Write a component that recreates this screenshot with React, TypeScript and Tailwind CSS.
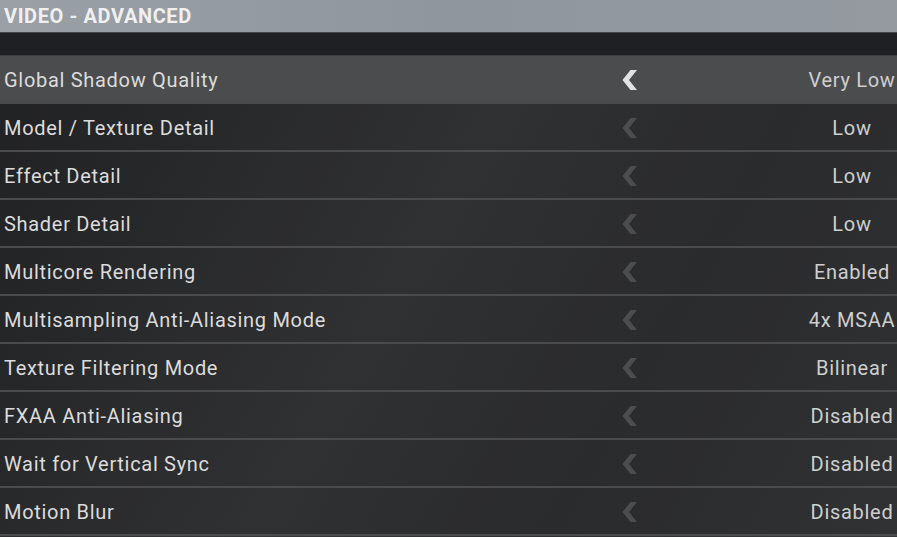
const settings = [
  { label: 'Global Shadow Quality', value: 'Very Low' },
  { label: 'Model / Texture Detail', value: 'Low' },
  { label: 'Effect Detail', value: 'Low' },
  { label: 'Shader Detail', value: 'Low' },
  { label: 'Multicore Rendering', value: 'Enabled' },
  { label: 'Multisampling Anti-Aliasing Mode', value: '4x MSAA' },
  { label: 'Texture Filtering Mode', value: 'Bilinear' },
  { label: 'FXAA Anti-Aliasing', value: 'Disabled' },
  { label: 'Wait for Vertical Sync', value: 'Disabled' },
  { label: 'Motion Blur', value: 'Disabled' },
];

const Chevron = ({ active }: { active: boolean }) => (
  <svg width="16" height="20" viewBox="0 0 16 20" className="shrink-0">
    <polygon
      points="15,0 8.5,0 0.5,10 8.5,20 15,20 7,10"
      fill={active ? '#e2e2e2' : '#4c4d4f'}
    />
  </svg>
);

export default function App() {
  return (
    <div
      className="w-[897px] h-[537px] overflow-hidden flex flex-col text-[#dcdcdc]"
      style={{ fontFamily: 'Roboto, "Liberation Sans", sans-serif' }}
    >
      <div className="h-[32px] shrink-0 bg-gradient-to-r from-[#9aa0a6] via-[#8f969d] to-[#949aa0] px-[4px] flex items-center">
        <h1 className="text-[20px] font-bold tracking-[0.6px] text-[#f0f0f0] leading-none">
          VIDEO - ADVANCED
        </h1>
      </div>
      <div className="h-[1px] shrink-0 bg-[#45484b]" />
      <div className="h-[23px] shrink-0 bg-[#1f2023] border-b-[1px] border-[#3a3c3e]" />
      <div className="relative flex-1 overflow-hidden bg-[linear-gradient(120deg,#252628_0%,#2c2d2f_20%,#363739_45%,#2f3032_70%,#37383a_100%)]">
        {settings.map((s, i) => {
          const active = i === 0;
          return (
            <div
              key={s.label}
              className={`h-[48px] flex items-center pt-[2px] border-b-[2px] border-[#4a4b4d] ${
                active ? 'bg-[#4b4c4e]' : 'bg-black/10'
              }`}
            >
              <span className="pl-[4px] w-[622px] shrink-0 text-[20px] tracking-[0.7px] whitespace-nowrap">
                {s.label}
              </span>
              <Chevron active={active} />
              <span className="ml-[154px] w-[120px] shrink-0 text-center text-[20px] tracking-[0.7px] whitespace-nowrap text-[#cfcfcf]">
                {s.value}
              </span>
            </div>
          );
        })}
      </div>
    </div>
  );
}
